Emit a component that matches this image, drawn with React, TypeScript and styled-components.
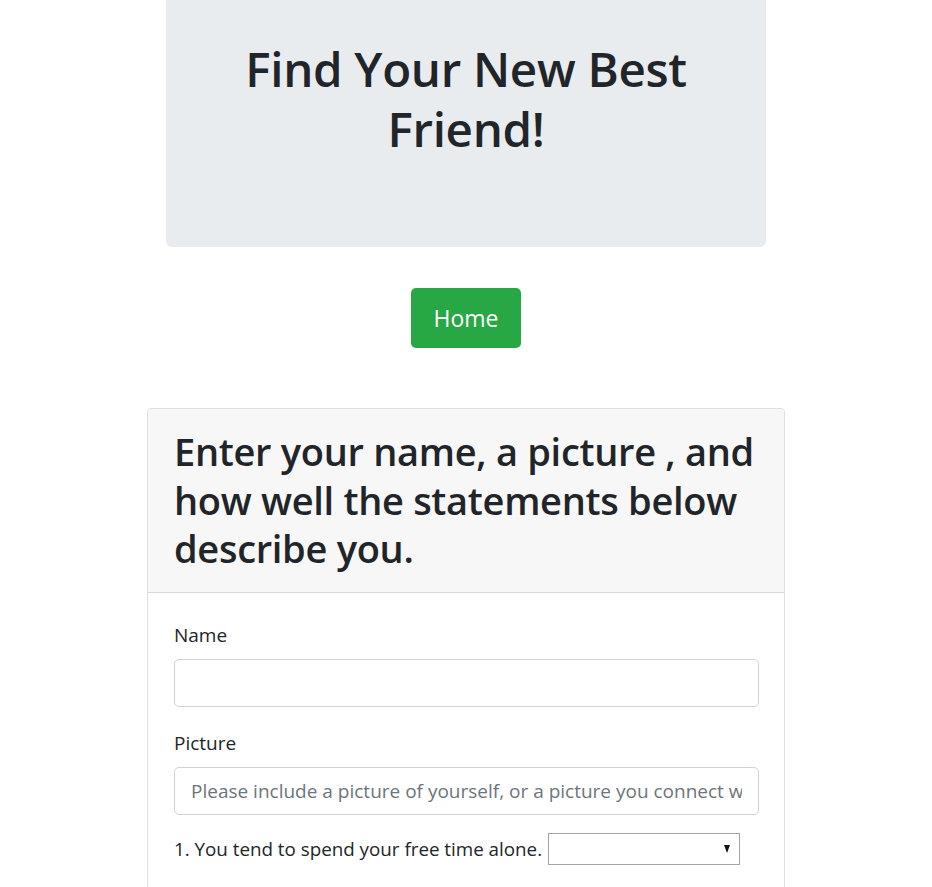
import React from "react";
import styled, { createGlobalStyle } from "styled-components";

const Global = createGlobalStyle`
  html, body { margin: 0; padding: 0; background: #fff; }
  body {
    font-family: "Open Sans", "Noto Sans", "Liberation Sans", sans-serif;
    color: #212529;
  }
  * { box-sizing: border-box; }
`;

const Page = styled.div`
  display: flex;
  flex-direction: column;
  align-items: center;
  padding-bottom: 40px;
`;

const Jumbotron = styled.header`
  width: 600px;
  height: 247px;
  background: #e9ecef;
  border-radius: 0 0 6px 6px;
  padding: 39px 32px 0;
  text-align: center;
`;

const Title = styled.h1`
  margin: 0;
  font-size: 47.5px;
  font-weight: 600;
  line-height: 60px;
  letter-spacing: -0.3px;
`;

const HomeButton = styled.button`
  margin-top: 41px;
  width: 110px;
  height: 60px;
  background: #28a745;
  color: #fff;
  border: none;
  border-radius: 5px;
  font-family: inherit;
  font-size: 23px;
  cursor: pointer;
`;

const Card = styled.section`
  margin-top: 60px;
  width: 638px;
  border: 1px solid rgba(0, 0, 0, 0.125);
  border-radius: 4px;
  overflow: hidden;
`;

const CardHeader = styled.div`
  background: #f7f7f7;
  border-bottom: 1px solid rgba(0, 0, 0, 0.125);
  padding: 18px 26px 19px;
`;

const HeaderTitle = styled.h2`
  margin: 0;
  font-size: 38px;
  font-weight: 600;
  line-height: 48.5px;
  letter-spacing: -0.3px;
`;

const CardBody = styled.div`
  padding: 26px 25px 26px 26px;
  display: flex;
  flex-direction: column;
`;

const Field = styled.div`
  display: flex;
  flex-direction: column;
  margin-bottom: 20px;
`;

const Label = styled.label`
  font-size: 19px;
  line-height: 28px;
  margin-bottom: 10px;
  margin-top: 2px;
`;

const Input = styled.input`
  width: 100%;
  height: 48px;
  border: 1px solid #ced4da;
  border-radius: 5px;
  padding: 8px 16px;
  font-family: inherit;
  font-size: 19px;
  color: #495057;
  background: #fff;
  &::placeholder { color: #6c757d; }
`;

const Question = styled.div`
  display: flex;
  align-items: center;
  gap: 6px;
  margin-top: -2px;
  font-size: 18.8px;
`;

const SelectWrap = styled.div`
  position: relative;
  width: 192px;
  height: 32px;
  &::after {
    content: "";
    position: absolute;
    right: 10px;
    top: 12px;
    border-left: 3.5px solid transparent;
    border-right: 3.5px solid transparent;
    border-top: 8px solid #111;
    pointer-events: none;
  }
`;

const Select = styled.select`
  appearance: none;
  width: 100%;
  height: 100%;
  border: 1px solid #a3a3a3;
  border-radius: 0;
  background: #fff;
  font-family: inherit;
  font-size: 15px;
`;

export default function App() {
  return (
    <>
      <Global />
      <Page>
        <Jumbotron>
          <Title>Find Your New Best Friend!</Title>
        </Jumbotron>
        <HomeButton>Home</HomeButton>
        <Card>
          <CardHeader>
            <HeaderTitle>
              Enter your name, a picture , and how well the statements below describe you.
            </HeaderTitle>
          </CardHeader>
          <CardBody>
            <Field>
              <Label htmlFor="name">Name</Label>
              <Input id="name" type="text" />
            </Field>
            <Field>
              <Label htmlFor="pic">Picture</Label>
              <Input
                id="pic"
                type="text"
                placeholder="Please include a picture of yourself, or a picture you connect with"
              />
            </Field>
            <Question>
              <span>1. You tend to spend your free time alone.</span>
              <SelectWrap>
                <Select aria-label="answer 1">
                  <option value=""></option>
                  <option value="1">1 (Strongly Disagree)</option>
                  <option value="5">5 (Strongly Agree)</option>
                </Select>
              </SelectWrap>
            </Question>
          </CardBody>
        </Card>
      </Page>
    </>
  );
}
